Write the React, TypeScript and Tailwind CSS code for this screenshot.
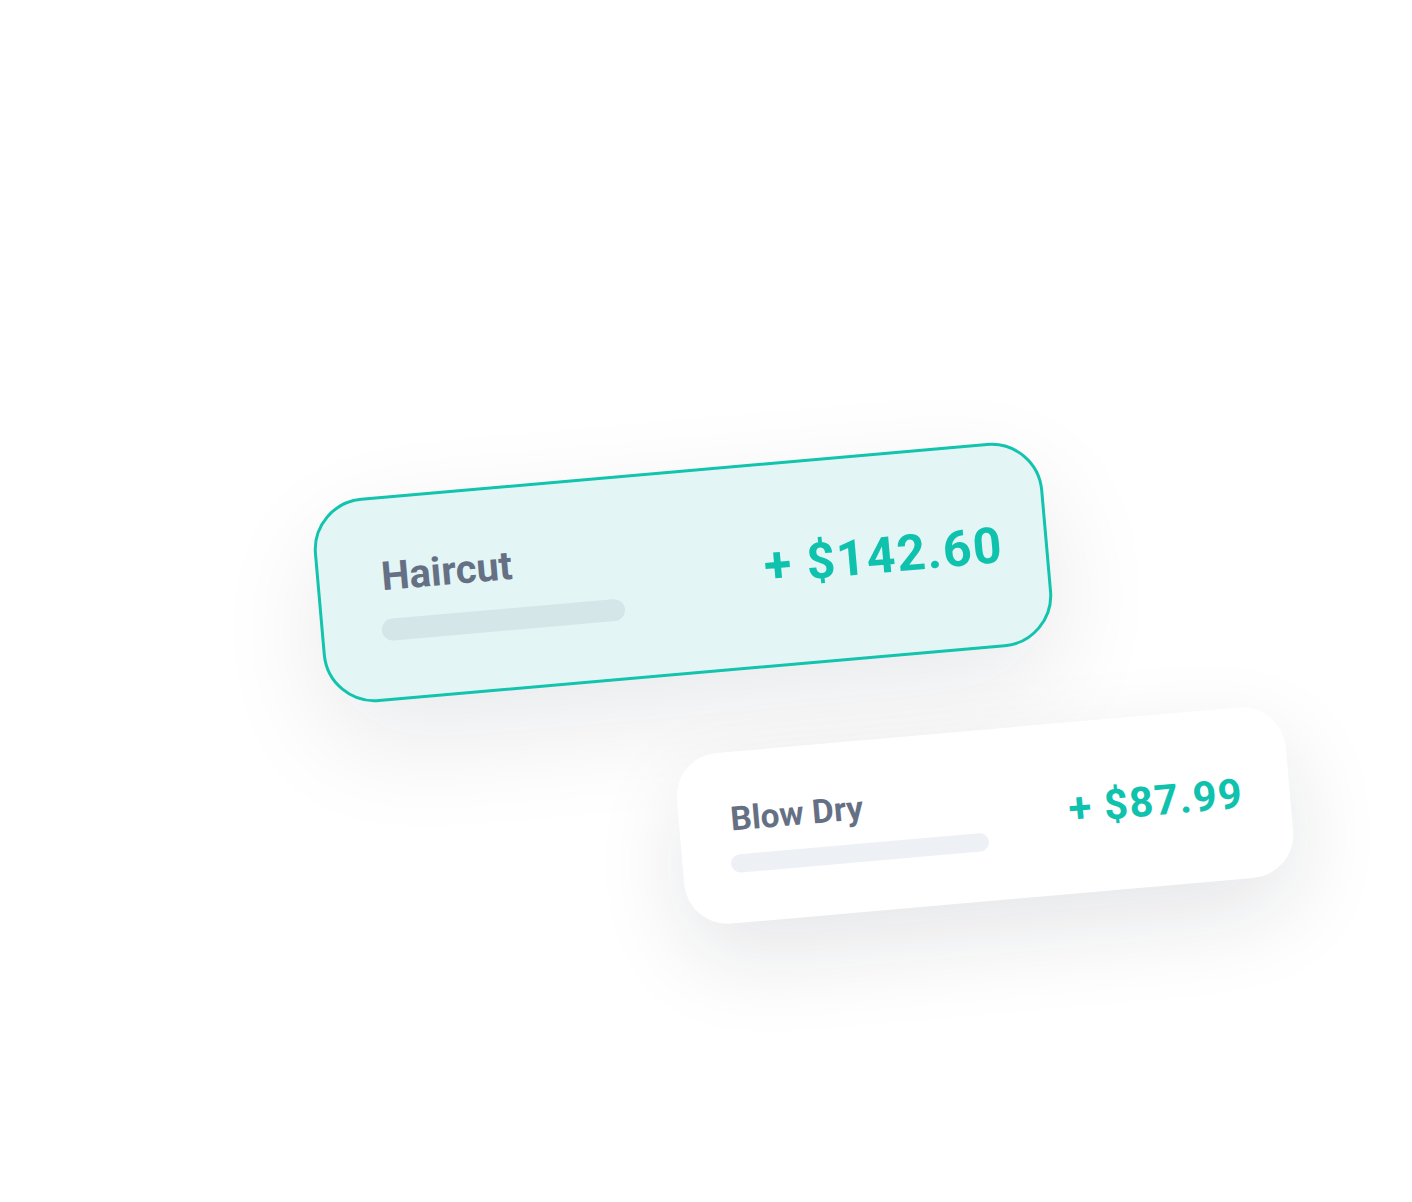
import React from 'react'

interface ServiceCardProps {
  name: string
  amount: string
  highlighted?: boolean
  barClass: string
  className?: string
}

function ServiceCard({ name, amount, highlighted = false, barClass, className = '' }: ServiceCardProps) {
  return (
    <div
      className={`flex h-[205px] w-[732px] shrink-0 items-center justify-between rounded-[52px] pl-[62px] ${
        highlighted
          ? 'border-[3px] border-[#12c3ad] bg-[#e3f6f5] pr-[42px] shadow-[0_40px_110px_rgba(15,23,42,0.09)]'
          : 'bg-white pr-[56px] shadow-[0_40px_110px_rgba(15,23,42,0.11)]'
      } ${className}`}
    >
      <div className="flex flex-col">
        <span className="text-[40px] font-bold leading-none text-[#667085]">{name}</span>
        <div
          className={`-ml-[4px] mt-[22px] h-[22px] rounded-full ${barClass} ${
            highlighted ? 'bg-[#d4e6e8]' : 'bg-[#edf0f4]'
          }`}
        />
      </div>
      <span className="text-[50px] font-bold leading-none tracking-[0.03em] text-[#0fc2ad]">{amount}</span>
    </div>
  )
}

export default function App() {
  return (
    <div className="min-h-[1202px] w-full overflow-hidden bg-white font-['Roboto','Liberation_Sans',sans-serif]">
      <div className="flex flex-col items-start pl-[317px] pt-[470px]">
        <ServiceCard
          name="Haircut"
          amount="+ $142.60"
          highlighted
          barClass="w-[244px]"
          className="rotate-[-5deg]"
        />
        <ServiceCard
          name="Blow Dry"
          amount="+ $87.99"
          barClass="w-[310px]"
          className="ml-[302px] mt-[38px] rotate-[-5deg] scale-[0.835]"
        />
      </div>
    </div>
  )
}
